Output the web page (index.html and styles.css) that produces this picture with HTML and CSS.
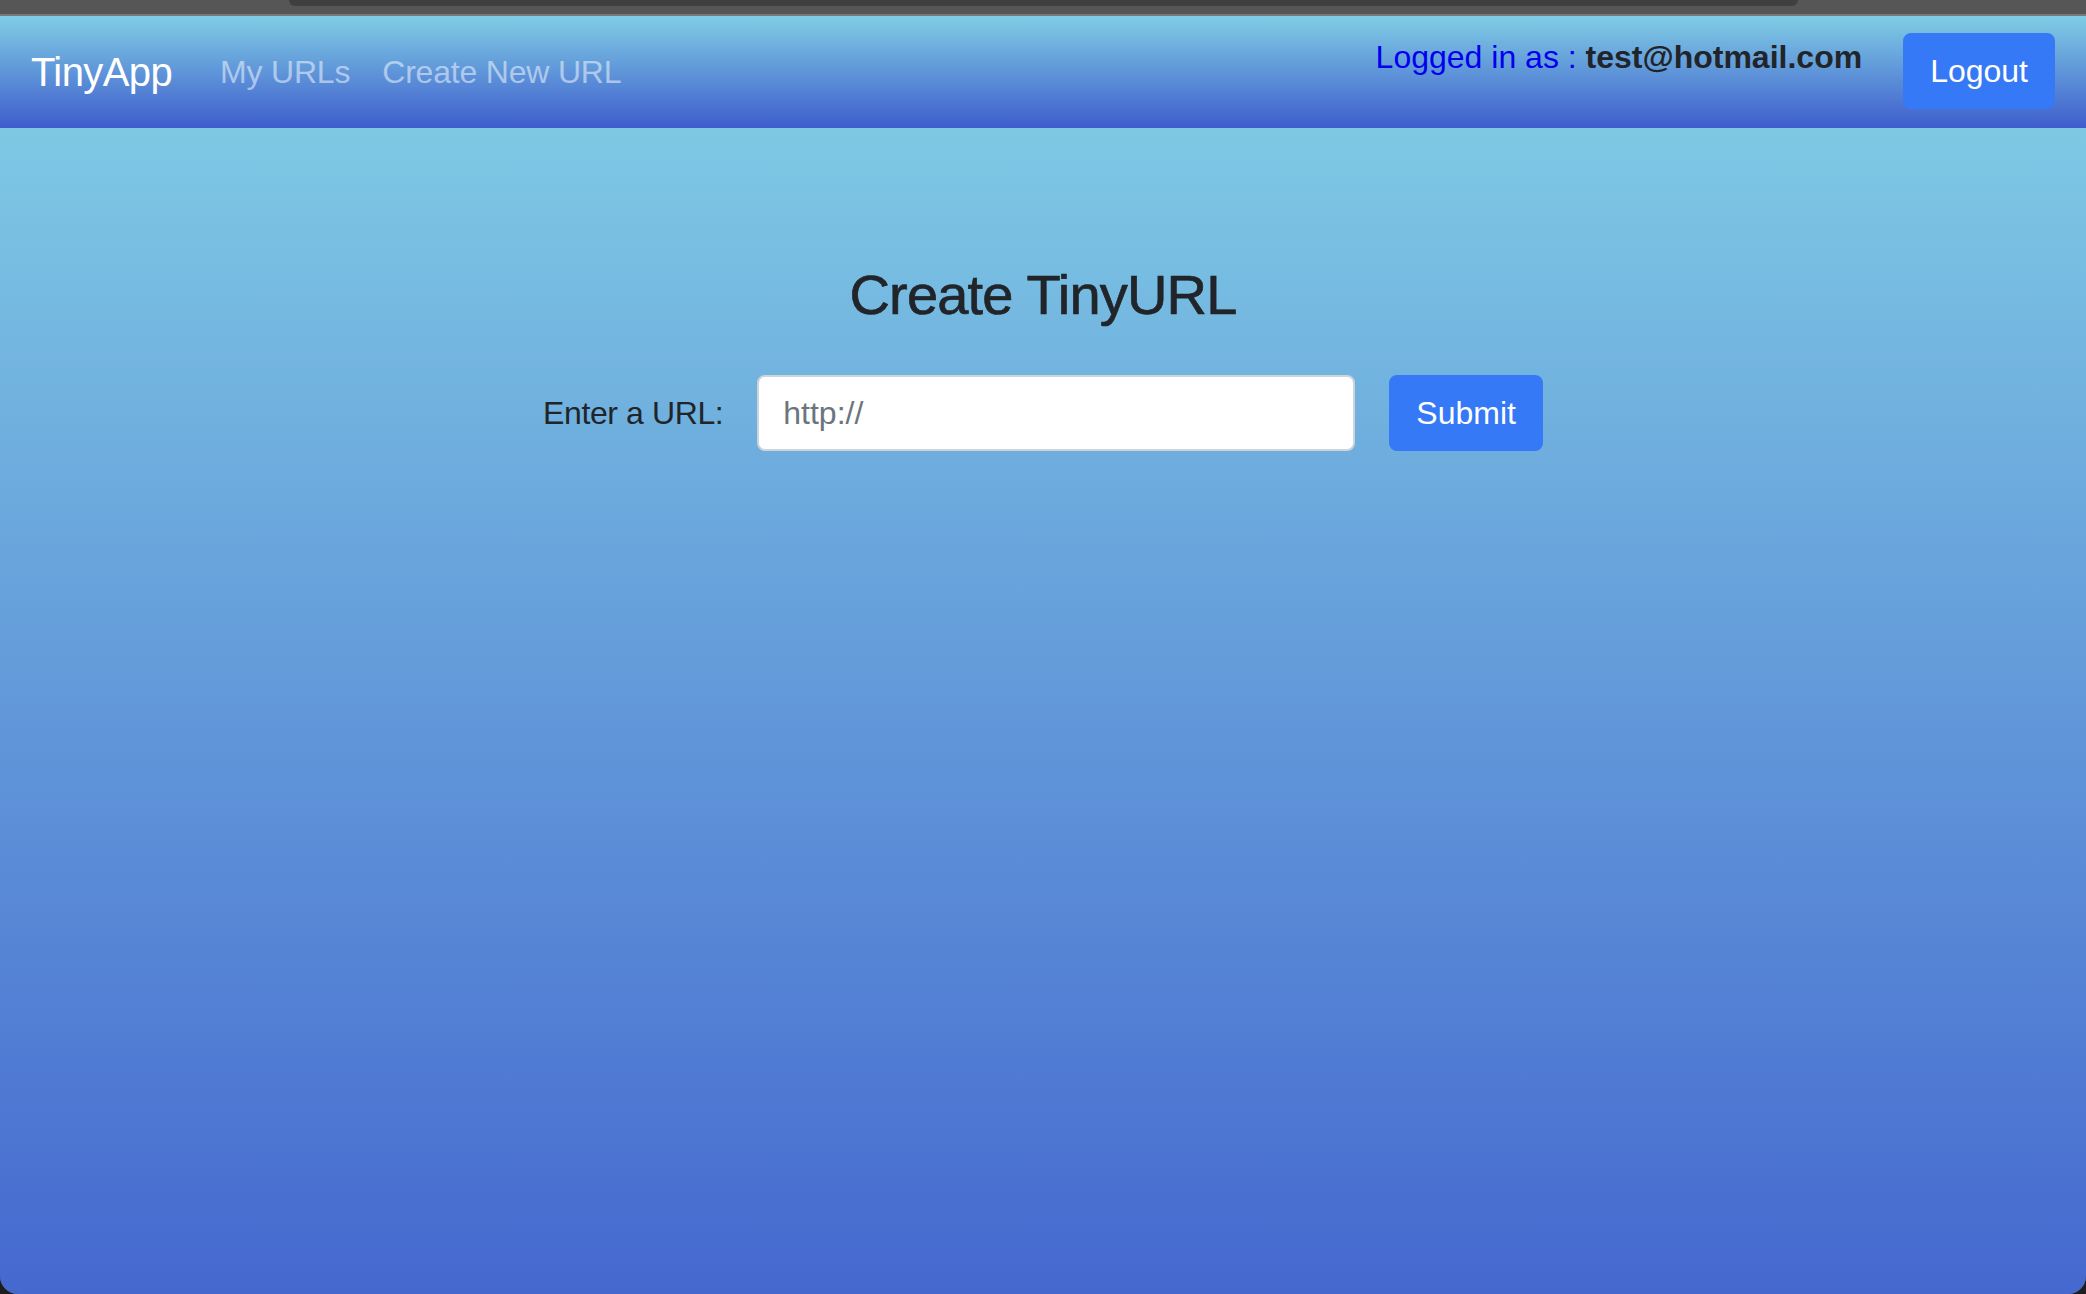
FILE: index.html
```html
<!DOCTYPE html>
<html lang="en">
<head>
<meta charset="utf-8">
<title>TinyApp</title>
<link rel="stylesheet" href="styles.css">
</head>
<body>
<div class="chrome"><div class="addr"></div></div>
<div class="window">
  <nav class="navbar">
    <a class="brand" href="#">TinyApp</a>
    <a class="nav-link" href="#">My URLs</a>
    <a class="nav-link" href="#">Create New URL</a>
    <div class="user">
      <span class="logged">Logged in as : <b class="email">test@hotmail.com</b></span>
      <button class="btn" type="button">Logout</button>
    </div>
  </nav>
  <main class="content">
    <h3 class="title">Create TinyURL</h3>
    <form class="url-form">
      <label class="label" for="longURL">Enter a URL:</label>
      <input class="input" id="longURL" type="text" placeholder="http://">
      <button class="btn" type="button">Submit</button>
    </form>
  </main>
</div>
</body>
</html>
```

FILE: styles.css
```css
* { box-sizing: border-box; }
html, body { margin: 0; padding: 0; }
body {
  width: 2086px;
  height: 1294px;
  overflow: hidden;
  background: #1e1e1e;
  font-family: "Liberation Sans", Arial, sans-serif;
  color: #212529;
  display: flex;
  flex-direction: column;
}
.chrome {
  height: 16px;
  background: #565656;
  border-bottom: 2px solid #7a7a7a;
  display: flex;
  justify-content: center;
}
.addr {
  width: 1509px;
  height: 6px;
  background: #403e41;
  border-radius: 0 0 16px 16px;
}
.window {
  flex: 1;
  display: flex;
  flex-direction: column;
  border-radius: 0 0 18px 18px;
  overflow: hidden;
  box-shadow: inset 0 -2px 0 rgba(255,255,255,0.2);
}
.navbar {
  height: 112px;
  padding: 0 31px 0 31px;
  display: flex;
  align-items: center;
  background: linear-gradient(#80cde5, #3e5dcd);
}
.brand {
  font-size: 40px;
  letter-spacing: -0.6px;
  color: #fff;
  text-decoration: none;
  margin-right: 32px;
  line-height: 60px;
}
.nav-link {
  font-size: 32px;
  color: rgba(255,255,255,0.5);
  text-decoration: none;
  padding: 0 16px;
  line-height: 48px;
  letter-spacing: -0.2px;
}
.user {
  margin-left: auto;
  display: flex;
  align-items: center;
}
.logged {
  font-size: 32px;
  line-height: 48px;
  color: #0000ee;
  margin-right: 41px;
  margin-bottom: 30px;
}
.email {
  color: #212529;
  font-weight: 700;
}
.btn {
  font-family: "Liberation Sans", Arial, sans-serif;
  font-size: 32px;
  line-height: 48px;
  padding: 12px 25px;
  border: 2px solid #3679f6;
  background: #3679f6;
  color: #fff;
  border-radius: 8px;
  height: 76px;
}
.navbar .btn { margin-top: -3px; }
.content {
  flex: 1;
  background: linear-gradient(#7ec8e4, #4568cf);
  padding-top: 133px;
}
.title {
  margin: 0;
  text-align: center;
  font-size: 56px;
  font-weight: 400;
  line-height: 67px;
  letter-spacing: -0.8px;
  -webkit-text-stroke: 0.7px #212529;
}
.url-form {
  margin-top: 47px;
  display: flex;
  align-items: center;
  justify-content: center;
  gap: 34px;
}
.label {
  font-size: 32px;
  line-height: 48px;
  letter-spacing: -0.4px;
}
.input {
  width: 598px;
  height: 76px;
  border: 2px solid #ced4da;
  border-radius: 8px;
  padding: 0 24px;
  font-family: "Liberation Sans", Arial, sans-serif;
  font-size: 32px;
  color: #495057;
  background: #fff;
}
.input::placeholder { color: #6c757d; }
```
